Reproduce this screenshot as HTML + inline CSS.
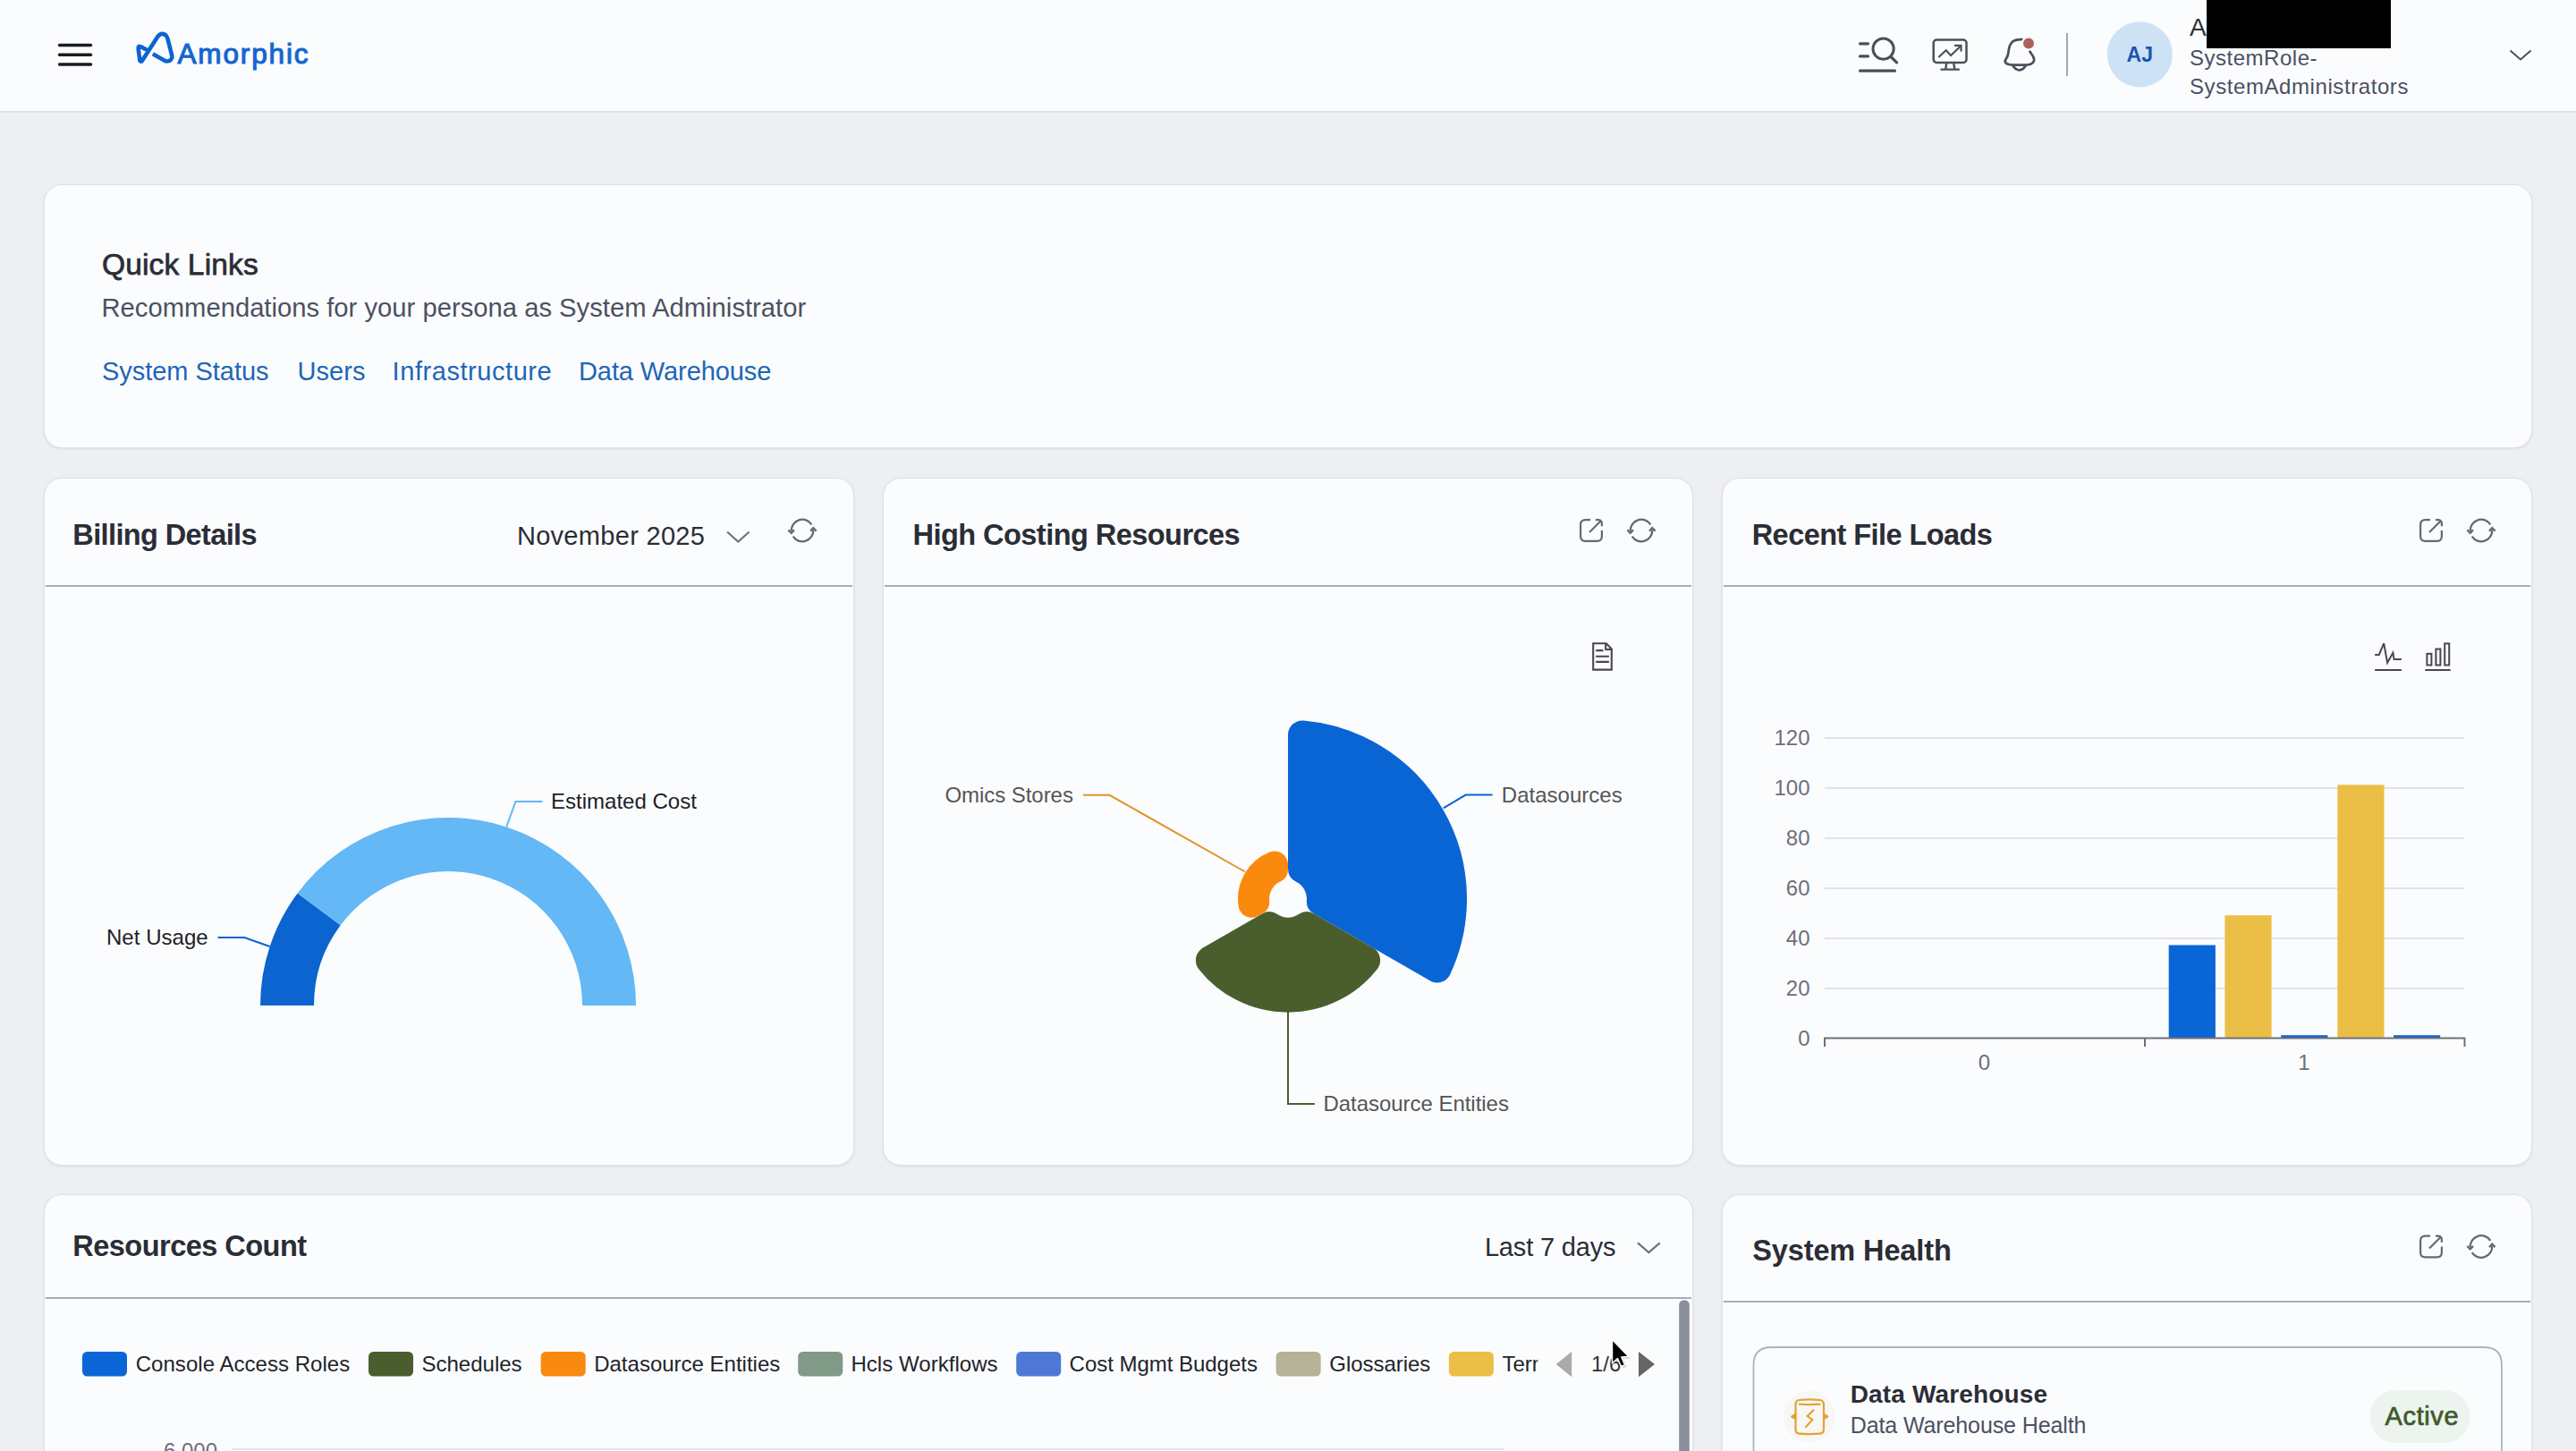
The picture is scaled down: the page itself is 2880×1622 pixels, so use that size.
<!DOCTYPE html>
<html><head><meta charset="utf-8"><title>Amorphic Dashboard</title>
<style>
html,body{margin:0;padding:0;}
body{width:2880px;height:1622px;overflow:hidden;position:relative;background:#eeeff2;font-family:"Liberation Sans", sans-serif;}
.header{position:absolute;left:0;top:0;width:2880px;height:124px;background:#fbfcfd;border-bottom:2px solid #dfe1e6;}
.card{position:absolute;box-sizing:border-box;background:#fbfcfd;border:1.5px solid #dfe0e4;border-radius:20px;box-shadow:0 1px 3px rgba(20,25,40,0.08);}
svg{position:absolute;left:0;top:0;}
svg text{font-family:"Liberation Sans", sans-serif;}
</style></head><body>
<div class="header"></div>
<div class="card" style="left:49px;top:206px;width:2782px;height:295px"></div>
<div class="card" style="left:49px;top:534px;width:906px;height:769px"></div>
<div class="card" style="left:987px;top:534px;width:906px;height:769px"></div>
<div class="card" style="left:1925px;top:534px;width:906px;height:769px"></div>
<div class="card" style="left:49px;top:1335px;width:1844px;height:400px"></div>
<div class="card" style="left:1925px;top:1335px;width:906px;height:400px"></div>
<svg width="2880" height="1622" viewBox="0 0 2880 1622">
<line x1="66.5" y1="50.5" x2="101.5" y2="50.5" stroke="#1b1c1f" stroke-width="3.4" stroke-linecap="round"/>
<line x1="66.5" y1="61.2" x2="101.5" y2="61.2" stroke="#1b1c1f" stroke-width="3.4" stroke-linecap="round"/>
<line x1="66.5" y1="72" x2="101.5" y2="72" stroke="#1b1c1f" stroke-width="3.4" stroke-linecap="round"/>
<path d="M170.8,60.3 L183.6,67.6 Q186.4,69.2 189.5,67.9 Q193,66 192.2,62 L187.4,43.1 Q185.7,37.9 181.5,37.9 Q178,37.9 175.3,42.4 L158.8,67.9 Q157.7,69.6 156.4,67.9 L154.6,54.1 Q154.3,51.2 157.1,52.1 L165.3,56.2" stroke="#0e63d1" stroke-width="4.6" fill="none" stroke-linejoin="round" stroke-linecap="butt"/>
<text x="198.50" y="70.7" font-size="31.5" fill="#1565d2" textLength="146.00" lengthAdjust="spacing" stroke="#1565d2" stroke-width="1.1">Amorphic</text>
<path d="M2079.5,48.8 H2088.5 M2079.5,62.9 H2088.5 M2079.5,79.2 H2118.5" stroke="#4a4f5b" stroke-width="3.2" fill="none" stroke-linecap="round"/>
<circle cx="2105.6" cy="54.6" r="11.6" stroke="#4a4f5b" stroke-width="3" fill="none"/>
<path d="M2114,63.5 L2120.6,69.8" stroke="#4a4f5b" stroke-width="3.2" fill="none" stroke-linecap="round"/>
<rect x="2161.7" y="44.5" width="36.8" height="25.4" rx="3.5" stroke="#4a4f5b" stroke-width="2.5" fill="none"/>
<path d="M2176.2,70.5 L2175.2,77.5 M2184.3,70.5 L2185.3,77.5 M2169.5,77.6 H2190.8" stroke="#4a4f5b" stroke-width="2.4" fill="none"/>
<path d="M2167.3,64 L2175.7,56.2 L2181.1,62 L2192,51.5" stroke="#4a4f5b" stroke-width="2.2" fill="none" stroke-linejoin="miter"/>
<path d="M2185,50.9 H2192.5 V57.4" stroke="#4a4f5b" stroke-width="2.2" fill="none"/>
<path d="M2261,44.2 Q2249.5,43.2 2246.8,51.5 Q2245.6,55.5 2245.3,59.5 Q2244.9,63 2242.5,66.2 Q2240.6,69.3 2243.6,71.3 Q2246.5,72.6 2251,72.6 H2265.5 Q2271,72.2 2273.2,69.6 Q2275,67 2273.2,63.4 L2269.3,57.2" stroke="#4a4f5b" stroke-width="2.7" fill="none" stroke-linejoin="round" stroke-linecap="round"/>
<path d="M2250,73 Q2253.5,78.3 2257.7,78.3 Q2262,78.3 2265,73" stroke="#4a4f5b" stroke-width="2.7" fill="none"/>
<circle cx="2268" cy="48.6" r="7.1" fill="#a9645a" stroke="#fbfcfd" stroke-width="2.2"/>
<rect x="2310" y="37" width="2" height="48" rx="0" fill="#a3a7b0"/>
<circle cx="2392.3" cy="60.8" r="36.6" fill="#cde2f5"/>
<text x="2392.3" y="68.8" font-size="23" font-weight="700" fill="#1a55b0" text-anchor="middle">AJ</text>
<text x="2448" y="39.5" font-size="28" fill="#2d3039">A</text>
<rect x="2467" y="0" width="206" height="54" rx="0" fill="#000"/>
<text x="2448.00" y="73.4" font-size="24" fill="#4a5061" textLength="142.50" lengthAdjust="spacing">SystemRole-</text>
<text x="2448.00" y="104.8" font-size="24" fill="#4a5061" textLength="244.40" lengthAdjust="spacing">SystemAdministrators</text>
<path d="M2806.5,56.5 L2818,66.5 L2829.5,56.5" stroke="#4a4f5b" stroke-width="2" fill="none"/>
<text x="114.00" y="307.3" font-size="33.5" fill="#2b2d36" textLength="174.70" lengthAdjust="spacing" stroke="#2b2d36" stroke-width="0.75">Quick Links</text>
<text x="113.50" y="353.9" font-size="29.2" fill="#4b5162" textLength="787.70" lengthAdjust="spacing">Recommendations for your persona as System Administrator</text>
<text x="114.00" y="425.3" font-size="29" fill="#1e66b8" textLength="186.50" lengthAdjust="spacing">System Status</text>
<text x="332.50" y="425.3" font-size="29" fill="#1e66b8" textLength="76.00" lengthAdjust="spacing">Users</text>
<text x="438.60" y="425.3" font-size="29" fill="#1e66b8" textLength="178.10" lengthAdjust="spacing">Infrastructure</text>
<text x="647.00" y="425.3" font-size="29" fill="#1e66b8" textLength="215.40" lengthAdjust="spacing">Data Warehouse</text>
<text x="81.30" y="608.9" font-size="32.5" font-weight="700" fill="#2b2d36" textLength="206.30" lengthAdjust="spacing">Billing Details</text>
<text x="577.90" y="608.7" font-size="29" fill="#2a2d35" textLength="210.00" lengthAdjust="spacing">November 2025</text>
<path d="M813,594.5 L825.3,605.5 L837.6,594.5" stroke="#6b7280" stroke-width="2.2" fill="none"/>
<path d="M907.32,586.30 A12.3,12.3 0 0 0 884.72,593.64" stroke="#656973" stroke-width="2.3" fill="none"/>
<path d="M886.68,599.70 A12.3,12.3 0 0 0 909.28,592.36" stroke="#656973" stroke-width="2.3" fill="none"/>
<path d="M881.40,592.40 L884.70,595.90 L888.00,592.40" stroke="#656973" stroke-width="2.3" fill="none" stroke-linejoin="miter"/>
<path d="M906.00,593.60 L909.30,590.10 L912.60,593.60" stroke="#656973" stroke-width="2.3" fill="none" stroke-linejoin="miter"/>
<rect x="51" y="654" width="902" height="2" rx="0" fill="#a9adb6"/>
<text x="1020.50" y="608.9" font-size="32.5" font-weight="700" fill="#2b2d36" textLength="366.20" lengthAdjust="spacing">High Costing Resources</text>
<path d="M1778,581.1 H1772.5 Q1767.1,581.1 1767.1,586.5 V599.5 Q1767.1,604.9 1772.5,604.9 H1785.5 Q1790.9,604.9 1790.9,599.5 V593" stroke="#656973" stroke-width="2.2" fill="none"/>
<path d="M1784,581.1 H1786.5 Q1790.9,581.1 1790.9,585.5 V588.3" stroke="#656973" stroke-width="2.2" fill="none"/>
<path d="M1777,595 L1789.8,582.2" stroke="#656973" stroke-width="2.2" fill="none"/>
<path d="M1845.32,586.30 A12.3,12.3 0 0 0 1822.72,593.64" stroke="#656973" stroke-width="2.3" fill="none"/>
<path d="M1824.68,599.70 A12.3,12.3 0 0 0 1847.28,592.36" stroke="#656973" stroke-width="2.3" fill="none"/>
<path d="M1819.40,592.40 L1822.70,595.90 L1826.00,592.40" stroke="#656973" stroke-width="2.3" fill="none" stroke-linejoin="miter"/>
<path d="M1844.00,593.60 L1847.30,590.10 L1850.60,593.60" stroke="#656973" stroke-width="2.3" fill="none" stroke-linejoin="miter"/>
<rect x="989" y="654" width="902" height="2" rx="0" fill="#a9adb6"/>
<text x="1958.70" y="608.9" font-size="32.5" font-weight="700" fill="#2b2d36" textLength="269.20" lengthAdjust="spacing">Recent File Loads</text>
<path d="M2717,581.1 H2711.5 Q2706.1,581.1 2706.1,586.5 V599.5 Q2706.1,604.9 2711.5,604.9 H2724.5 Q2729.9,604.9 2729.9,599.5 V593" stroke="#656973" stroke-width="2.2" fill="none"/>
<path d="M2723,581.1 H2725.5 Q2729.9,581.1 2729.9,585.5 V588.3" stroke="#656973" stroke-width="2.2" fill="none"/>
<path d="M2716,595 L2728.8,582.2" stroke="#656973" stroke-width="2.2" fill="none"/>
<path d="M2784.32,586.30 A12.3,12.3 0 0 0 2761.72,593.64" stroke="#656973" stroke-width="2.3" fill="none"/>
<path d="M2763.68,599.70 A12.3,12.3 0 0 0 2786.28,592.36" stroke="#656973" stroke-width="2.3" fill="none"/>
<path d="M2758.40,592.40 L2761.70,595.90 L2765.00,592.40" stroke="#656973" stroke-width="2.3" fill="none" stroke-linejoin="miter"/>
<path d="M2783.00,593.60 L2786.30,590.10 L2789.60,593.60" stroke="#656973" stroke-width="2.3" fill="none" stroke-linejoin="miter"/>
<rect x="1927" y="654" width="902" height="2" rx="0" fill="#a9adb6"/>
<path d="M291.00,1124.00 A210,210 0 0 1 332.63,998.50 L380.73,1034.36 A150,150 0 0 0 351.00,1124.00 Z" fill="#0b64cf"/>
<path d="M332.63,998.50 A210,210 0 0 1 711.00,1124.00 L651.00,1124.00 A150,150 0 0 0 380.73,1034.36 Z" fill="#63b8f5"/>
<path d="M566.2,924.3 L576.5,896 L606.5,896" stroke="#63b8f5" stroke-width="2" fill="none"/>
<text x="616.00" y="903.8" font-size="24" fill="#1f2128" textLength="162.80" lengthAdjust="spacing">Estimated Cost</text>
<path d="M243.5,1048 L273.3,1048 L301.5,1058" stroke="#0b64cf" stroke-width="2" fill="none"/>
<text x="119.00" y="1055.7" font-size="24" fill="#1f2128" textLength="113.70" lengthAdjust="spacing">Net Usage</text>
<path d="M1456.00,821.40 A184,184 0 0 1 1606.75,1082.50 L1476.89,1007.52 A37,37 0 0 0 1456.00,971.34 Z" fill="#0a65d4" stroke="#0a65d4" stroke-width="32" stroke-linejoin="round"/>
<path d="M1527.12,1073.48 A111,111 0 0 1 1352.88,1073.48 L1419.11,1035.24 A37,37 0 0 0 1460.89,1035.24 Z" fill="#4a5e2d" stroke="#4a5e2d" stroke-width="32" stroke-linejoin="round"/>
<path d="M1399.45,1010.79 A41,41 0 0 1 1425.00,966.54 L1425.00,971.97 A36,36 0 0 0 1404.16,1008.07 Z" fill="#f98a0e" stroke="#f98a0e" stroke-width="30" stroke-linejoin="round"/>
<path d="M1613.8,903.3 L1638.6,888.6 L1668.6,888.6" stroke="#0a65d4" stroke-width="2" fill="none"/>
<text x="1678.80" y="897" font-size="24" fill="#555" textLength="134.90" lengthAdjust="spacing">Datasources</text>
<path d="M1392,974.5 L1240.5,888.8 L1211,888.8" stroke="#e1932b" stroke-width="2" fill="none"/>
<text x="1056.40" y="896.9" font-size="24" fill="#555" textLength="143.50" lengthAdjust="spacing">Omics Stores</text>
<path d="M1440,1131 V1234 H1469.8" stroke="#4a5e2d" stroke-width="2" fill="none"/>
<text x="1479.40" y="1241.8" font-size="24" fill="#555" textLength="207.50" lengthAdjust="spacing">Datasource Entities</text>
<path d="M1781.2,719.2 H1795.8 L1801.8,725.4 V748.6 H1781.2 Z" stroke="#46484e" stroke-width="2.1" fill="none" stroke-linejoin="miter"/>
<path d="M1795.2,719.2 V726 H1801.8" stroke="#46484e" stroke-width="2.1" fill="none"/>
<path d="M1784.2,727.1 H1792.4 M1784.2,733.7 H1798.9 M1784.2,739.9 H1798.9" stroke="#46484e" stroke-width="2.1" fill="none"/>
<rect x="2040" y="824" width="715" height="2" rx="0" fill="#e0e3e9"/>
<rect x="2040" y="880" width="715" height="2" rx="0" fill="#e0e3e9"/>
<rect x="2040" y="936" width="715" height="2" rx="0" fill="#e0e3e9"/>
<rect x="2040" y="992" width="715" height="2" rx="0" fill="#e0e3e9"/>
<rect x="2040" y="1048" width="715" height="2" rx="0" fill="#e0e3e9"/>
<rect x="2040" y="1104" width="715" height="2" rx="0" fill="#e0e3e9"/>
<text x="2023.5" y="832.5" font-size="24" fill="#6e7079" text-anchor="end">120</text>
<text x="2023.5" y="888.5" font-size="24" fill="#6e7079" text-anchor="end">100</text>
<text x="2023.5" y="944.5" font-size="24" fill="#6e7079" text-anchor="end">80</text>
<text x="2023.5" y="1000.5" font-size="24" fill="#6e7079" text-anchor="end">60</text>
<text x="2023.5" y="1056.5" font-size="24" fill="#6e7079" text-anchor="end">40</text>
<text x="2023.5" y="1112.5" font-size="24" fill="#6e7079" text-anchor="end">20</text>
<text x="2023.5" y="1169" font-size="24" fill="#6e7079" text-anchor="end">0</text>
<rect x="2424.7" y="1056.5" width="52.2" height="104.0" rx="0" fill="#0a66d6"/>
<rect x="2487.4" y="1023.2" width="52.2" height="137.29999999999995" rx="0" fill="#ebbe46"/>
<rect x="2550.2" y="1157.2" width="52.2" height="3.2999999999999545" rx="0" fill="#0a66d6"/>
<rect x="2613.3" y="877.3" width="52.2" height="283.20000000000005" rx="0" fill="#ebbe46"/>
<rect x="2676" y="1157.2" width="52.2" height="3.2999999999999545" rx="0" fill="#0a66d6"/>
<rect x="2039" y="1159.5" width="717" height="2" rx="0" fill="#6e7079"/>
<rect x="2039" y="1160" width="2" height="10" rx="0" fill="#6e7079"/>
<rect x="2397" y="1160" width="2" height="10" rx="0" fill="#6e7079"/>
<rect x="2754.5" y="1160" width="2" height="10" rx="0" fill="#6e7079"/>
<text x="2218.5" y="1195.6" font-size="24" fill="#6e7079" text-anchor="middle">0</text>
<text x="2576" y="1195.6" font-size="24" fill="#6e7079" text-anchor="middle">1</text>
<path d="M2655.1,731.9 H2659.8 L2665.2,719.2 L2669.1,740.8 L2675.4,729.8 L2676.6,737 H2684.9" stroke="#484a50" stroke-width="2" fill="none" stroke-linejoin="miter" stroke-miterlimit="3"/>
<rect x="2655.1" y="748" width="29.8" height="2" rx="0" fill="#46484e"/>
<rect x="2713.4" y="730.8" width="5" height="12.700000000000045" stroke="#46484e" stroke-width="2" fill="none"/>
<rect x="2723.4" y="725.5" width="5" height="18.0" stroke="#46484e" stroke-width="2" fill="none"/>
<rect x="2733.2" y="719.4" width="5" height="24.100000000000023" stroke="#46484e" stroke-width="2" fill="none"/>
<rect x="2711.3" y="748" width="28.4" height="2" rx="0" fill="#46484e"/>
<text x="81.30" y="1404.3" font-size="32.5" font-weight="700" fill="#2b2d36" textLength="261.80" lengthAdjust="spacing">Resources Count</text>
<text x="1659.90" y="1404.2" font-size="29" fill="#2a2d35" textLength="146.60" lengthAdjust="spacing">Last 7 days</text>
<path d="M1831,1389.3 L1843.35,1400.1 L1855.7,1389.3" stroke="#6b7280" stroke-width="2.2" fill="none"/>
<rect x="51" y="1450" width="1840" height="2" rx="0" fill="#a9adb6"/>
<rect x="1877.2" y="1453.5" width="11.6" height="200" rx="5" fill="#8a909b"/>
<rect x="92" y="1511" width="50" height="27.5" rx="5.5" fill="#0a66d6"/>
<text x="151.70" y="1533.3" font-size="24" fill="#22242a" textLength="239.50" lengthAdjust="spacing">Console Access Roles</text>
<rect x="412" y="1511" width="50" height="27.5" rx="5.5" fill="#4a5e2d"/>
<text x="471.5" y="1533.3" font-size="24" fill="#22242a">Schedules</text>
<rect x="604.7" y="1511" width="50" height="27.5" rx="5.5" fill="#f98a0e"/>
<text x="664.2" y="1533.3" font-size="24" fill="#22242a">Datasource Entities</text>
<rect x="892.2" y="1511" width="50" height="27.5" rx="5.5" fill="#809a87"/>
<text x="951.40" y="1533.3" font-size="24" fill="#22242a" textLength="164.20" lengthAdjust="spacing">Hcls Workflows</text>
<rect x="1136.2" y="1511" width="50" height="27.5" rx="5.5" fill="#4e78d6"/>
<text x="1195.60" y="1533.3" font-size="24" fill="#22242a" textLength="210.30" lengthAdjust="spacing">Cost Mgmt Budgets</text>
<rect x="1426.6" y="1511" width="50" height="27.5" rx="5.5" fill="#b6b296"/>
<text x="1486.30" y="1533.3" font-size="24" fill="#22242a" textLength="113.00" lengthAdjust="spacing">Glossaries</text>
<rect x="1619.9" y="1511" width="50" height="27.5" rx="5.5" fill="#ebbe46"/>
<clipPath id="termclip"><rect x="1670" y="1500" width="49.5" height="50"/></clipPath>
<text x="1679.4" y="1533.3" font-size="24" fill="#22242a" clip-path="url(#termclip)">Term</text>
<rect x="1680" y="1505" width="40" height="40" fill="none"/>
<path d="M1757.2,1511 V1539.2 L1739.7,1525.1 Z" stroke="none" stroke-width="0" fill="#aaaaaa"/>
<text x="1779" y="1533" font-size="24" fill="#333">1/6</text>
<path d="M1832,1511 V1539.2 L1850,1525.1 Z" stroke="none" stroke-width="0" fill="#666666"/>
<path d="M1804.5,1500 L1804.5,1526 L1810.5,1520.5 L1814.5,1529.5 L1818.5,1527.8 L1814.8,1519 L1822.8,1518.5 Z" stroke="none" stroke-width="0" fill="rgba(0,0,0,0.18)"/>
<path d="M1802.5,1497.5 L1802.5,1524 L1808.5,1518.5 L1812.5,1527.5 L1816.5,1525.8 L1812.8,1517 L1820.8,1516.5 Z" stroke="#fff" stroke-width="1.4" fill="#000" stroke-linejoin="round"/>
<text x="243" y="1630" font-size="24" fill="#6e7079" text-anchor="end">6,000</text>
<rect x="260" y="1619" width="1422" height="2" rx="0" fill="#e0e3e9"/>
<text x="1959.20" y="1408.9" font-size="32.5" font-weight="700" fill="#2b2d36" textLength="222.60" lengthAdjust="spacing">System Health</text>
<path d="M2717,1381.6 H2711.5 Q2706.1,1381.6 2706.1,1387.0 V1400.0 Q2706.1,1405.4 2711.5,1405.4 H2724.5 Q2729.9,1405.4 2729.9,1400.0 V1393.5" stroke="#656973" stroke-width="2.2" fill="none"/>
<path d="M2723,1381.6 H2725.5 Q2729.9,1381.6 2729.9,1386.0 V1388.8" stroke="#656973" stroke-width="2.2" fill="none"/>
<path d="M2716,1395.5 L2728.8,1382.7" stroke="#656973" stroke-width="2.2" fill="none"/>
<path d="M2784.32,1386.80 A12.3,12.3 0 0 0 2761.72,1394.14" stroke="#656973" stroke-width="2.3" fill="none"/>
<path d="M2763.68,1400.20 A12.3,12.3 0 0 0 2786.28,1392.86" stroke="#656973" stroke-width="2.3" fill="none"/>
<path d="M2758.40,1392.90 L2761.70,1396.40 L2765.00,1392.90" stroke="#656973" stroke-width="2.3" fill="none" stroke-linejoin="miter"/>
<path d="M2783.00,1394.10 L2786.30,1390.60 L2789.60,1394.10" stroke="#656973" stroke-width="2.3" fill="none" stroke-linejoin="miter"/>
<rect x="1927" y="1454" width="902" height="2" rx="0" fill="#a9adb6"/>
<path d="M1960.5,1622 V1526 Q1960.5,1506 1980.5,1506 H2777 Q2797,1506 2797,1526 V1622" stroke="#aeb2bb" stroke-width="1.8" fill="none"/>
<circle cx="2023" cy="1583.5" r="29" fill="#f7f7f5"/>
<path d="M2007.5,1570 Q2007.5,1565.2 2012,1565 Q2023,1563.6 2034,1565 Q2039,1565.2 2039,1570 V1598 Q2039,1602.4 2034,1602.6 Q2023,1603.6 2012,1602.6 Q2007.5,1602.4 2007.5,1598 Z" stroke="#e3a233" stroke-width="2.2" fill="none"/>
<path d="M2010.8,1569.5 Q2023,1570.6 2035.5,1569.5" stroke="#e3a233" stroke-width="2.2" fill="none"/>
<path d="M2007.5,1580.5 L2002.8,1583.5 L2007.5,1586.5 Z M2039,1580.5 L2043.7,1583.5 L2039,1586.5 Z" stroke="#e3a233" stroke-width="1.6" fill="#e3a233" stroke-linejoin="round"/>
<path d="M2027.5,1576.4 L2020.7,1582.9 L2026.3,1587.2 L2019,1595.1" stroke="#e3a233" stroke-width="2.2" fill="none" stroke-linecap="round"/>
<text x="2068.70" y="1568" font-size="28" font-weight="700" fill="#2b2d36" textLength="220.40" lengthAdjust="spacing">Data Warehouse</text>
<text x="2068.70" y="1602.3" font-size="25" fill="#4b5162" textLength="263.80" lengthAdjust="spacing">Data Warehouse Health</text>
<rect x="2649.5" y="1554" width="112" height="59" rx="29.5" fill="#edf3ee"/>
<text x="2666.60" y="1593.1" font-size="29" fill="#3e5a2b" textLength="82.00" lengthAdjust="spacing" stroke="#3e5a2b" stroke-width="0.7">Active</text>
</svg>
</body></html>
